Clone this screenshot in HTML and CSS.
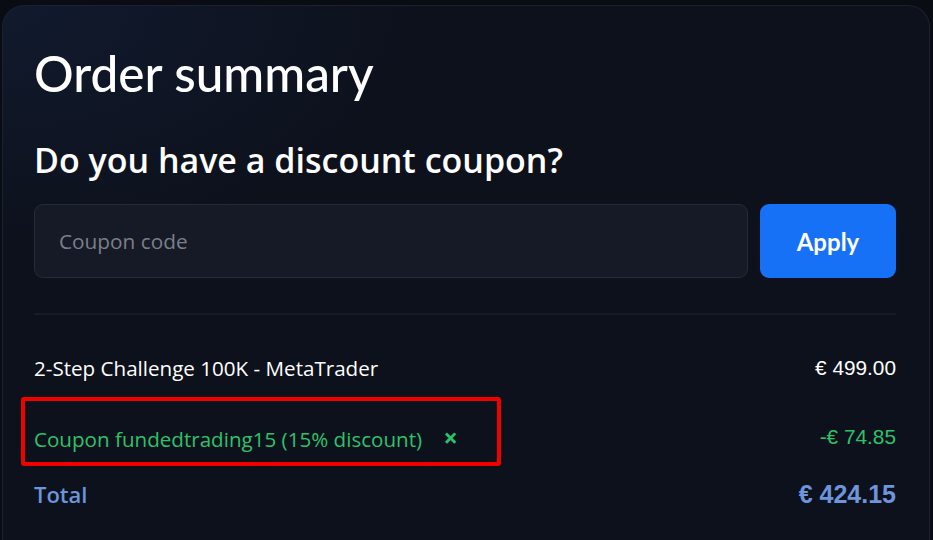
FILE: index.html
```html
<!DOCTYPE html>
<html lang="en">
<head>
    <meta charset="UTF-8">
    <title>Order summary</title>
    <link rel="stylesheet" href="styles.css">
</head>
<body>
    <div class="card">
        <h1 class="title">Order summary</h1>

        <h2 class="subtitle">Do you have a discount coupon?</h2>
        <form class="coupon-form">
            <input type="text" class="coupon-input" placeholder="Coupon code">
            <button type="submit" class="apply-btn">Apply</button>
        </form>

        <div class="lines">
            <div class="line">
                <span>2-Step Challenge 100K - MetaTrader</span>
                <span class="price">€ 499.00</span>
            </div>
            <div class="line discount">
                <span class="coupon-label">Coupon fundedtrading15 (15% discount) <span class="remove">×</span></span>
                <span class="price">-€ 74.85</span>
            </div>
            <div class="line total">
                <span>Total</span>
                <span class="price">€ 424.15</span>
            </div>
        </div>
    </div>
</body>
</html>
```

FILE: styles.css
```css
body {
    margin: 0;
    padding: 5px 3px 0 2px;
    background-color: #0a0c14;
    font-family: "Open Sans", "Noto Sans", sans-serif;
    height: 540px;
    box-sizing: border-box;
    overflow: hidden;
}

.card {
    height: 100%;
    padding: 0 33px 0 31px;
    border: 1px solid #1c2131;
    border-bottom: none;
    border-radius: 22px 22px 0 0;
    background: radial-gradient(ellipse 700px 400px at 0 0, #111a2e 0%, #0d111c 60%, #0d111c 100%);
    box-sizing: border-box;
}

.title {
    margin: 0;
    padding-top: 39px;
    font-family: Lato, sans-serif;
    font-weight: 500;
    font-size: 49.5px;
    line-height: 56px;
    color: #fff;
}

.subtitle {
    margin: 39px 0 0 0;
    font-weight: 600;
    font-size: 34px;
    line-height: 40px;
    color: #fff;
}

.coupon-form {
    display: flex;
    gap: 12px;
    margin-top: 24px;
    padding-bottom: 35px;
    border-bottom: 2px solid #161b28;
}

.coupon-input {
    flex: 1;
    height: 74px;
    padding: 0 24px;
    border: 1px solid #262b3a;
    border-radius: 9px;
    background-color: #161a26;
    color: #fff;
    font-family: inherit;
    font-size: 20.8px;
    box-sizing: border-box;
    outline: none;
}

.coupon-input::placeholder {
    color: #7b7f89;
}

.apply-btn {
    width: 136px;
    height: 74px;
    border: none;
    border-radius: 9px;
    background-color: #1771f6;
    color: #fff;
    font-family: Lato, sans-serif;
    font-weight: 700;
    font-size: 24px;
    cursor: pointer;
}

.lines {
    padding-top: 34px;
}

.line {
    display: flex;
    justify-content: space-between;
    align-items: center;
    height: 38px;
    font-size: 20.6px;
    color: #fff;
}

.price {
    font-family: "Liberation Sans", Arial, sans-serif;
    font-size: 20.8px;
}

.discount {
    margin-top: 31px;
    color: #2cc26a;
}

.coupon-label {
    position: relative;
}

.coupon-label::after {
    content: "";
    position: absolute;
    left: -13px;
    top: -23px;
    width: 480px;
    height: 69px;
    border: 4px solid #f20000;
    border-radius: 3px;
    box-sizing: border-box;
}

.remove {
    margin-left: 16px;
    font-weight: 700;
    font-size: 25px;
}

.total {
    margin-top: 19px;
    color: #6c95dd;
    font-weight: 600;
    font-size: 22px;
}

.total .price {
    font-weight: 700;
    font-size: 25px;
}
```
